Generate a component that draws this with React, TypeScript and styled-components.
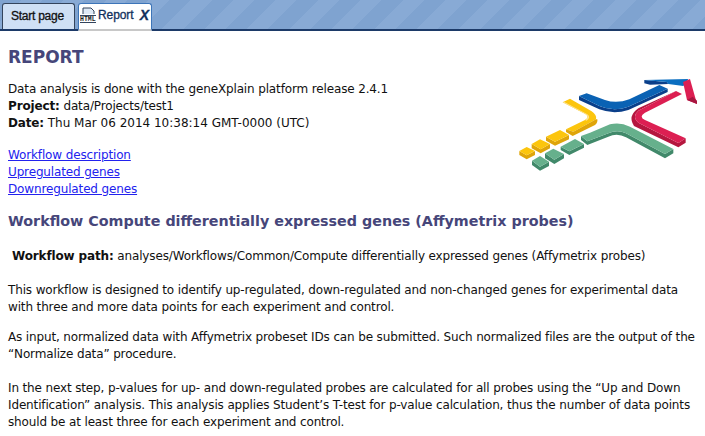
import styled, { createGlobalStyle } from "styled-components";

const Global = createGlobalStyle`
  html, body { margin: 0; padding: 0; background: #fff; }
  body { width: 705px; height: 436px; overflow: hidden; }
`;

const Page = styled.div`
  width: 705px;
  height: 436px;
  overflow: hidden;
  font-family: "DejaVu Sans", "Noto Sans", sans-serif;
  font-size: 12px;
  line-height: 17px;
  letter-spacing: -0.14px;
  color: #111;
`;

const TabStrip = styled.div`
  display: flex;
  align-items: flex-start;
  gap: 3px;
  padding: 3px 0 0 2px;
  height: 26px;
  border-bottom: 2px solid #1c3a68;
  background: repeating-linear-gradient(135deg, #7fa3d0 0 15px, #88aad5 15px 30px);
  font-family: "Liberation Sans", Arial, sans-serif;
  letter-spacing: 0;
`;

const Tab = styled.div<{ $active?: boolean }>`
  height: ${(p) => (p.$active ? "28px" : "26px")};
  box-sizing: border-box;
  display: flex;
  align-items: center;
  gap: 2px;
  white-space: nowrap;
  padding: ${(p) => (p.$active ? "0 1px 2px 1px" : "0 8px")};
  width: ${(p) => (p.$active ? "74px" : "73px")};
  border: 1px solid ${(p) => (p.$active ? "#3d75b8" : "#33445c")};
  border-bottom: ${(p) => (p.$active ? "2px solid #c8c8c8" : "none")};
  border-radius: 3px 3px 0 0;
  background: ${(p) => (p.$active ? "#fff" : "#cfe0f5")};
  color: ${(p) => (p.$active ? "#12305c" : "#111")};
  letter-spacing: ${(p) => (p.$active ? "-0.1px" : "-0.25px")};
  -webkit-text-stroke: 0.3px currentColor;
`;

const CloseMark = styled.span`
  margin-left: auto;
  margin-right: 1px;
  font-weight: 700;
  font-style: italic;
  font-size: 14px;
  color: #12305c;
`;

const Content = styled.div`
  position: relative;
  padding: 0 8px;
`;

const Title = styled.h1`
  margin: 0;
  padding-top: 15px;
  font-size: 17px;
  line-height: 22px;
  letter-spacing: 0;
  font-weight: 700;
  color: #46467a;
`;

const Meta = styled.div`
  margin-top: 13px;
`;

const DateValue = styled.span`
  letter-spacing: 0;
`;

const Links = styled.div`
  margin-top: 15px;
  display: flex;
  flex-direction: column;
  a { color: #2222ee; text-decoration: underline; }
`;

const Heading = styled.h2`
  margin: 13px 0 0;
  font-size: 14.3px;
  line-height: 20px;
  letter-spacing: 0;
  font-weight: 700;
  color: #46467a;
`;

const WorkflowPath = styled.p`
  margin: 17px 0 0;
  padding-left: 4px;
  white-space: nowrap;
`;

const Para = styled.p<{ $gap?: number }>`
  margin: ${(p) => p.$gap ?? 13}px 0 0;
  white-space: nowrap;
`;

const LogoWrap = styled.svg`
  position: absolute;
  left: 510px;
  top: 39px;
  width: 195px;
  height: 110px;
`;

function HtmlIcon() {
  return (
    <svg width="16" height="17" viewBox="0 0 16 17">
      <path d="M3 7V1h8l3 3v3" fill="#dfe9f5" stroke="#33445c" />
      <path d="M0 8.5h16M0 15.5h16" stroke="#33445c" />
      <text x="0" y="14" fontFamily="'Liberation Mono', monospace" fontSize="6.5" fontWeight="700" letterSpacing="0" fill="#222">HTML</text>
    </svg>
  );
}

const YELLOW = ["#fcc50d", "#dfa50a"];
const GREEN = ["#66b08c", "#41896a"];

// small blocks of the logo: top face, then the side below it
const blocks = [
  { c: YELLOW, top: "108,200 150,180 177,195 135,215", side: "108,200 135,215 177,195 177,208 135,227 108,212" },
  { c: YELLOW, top: "65,222 90,208 120,222 92,238", side: "65,222 92,238 120,222 120,235 92,250 65,235" },
  { c: YELLOW, top: "28,243 50,231 75,243 50,256", side: "28,243 50,256 75,243 75,255 50,268 28,255" },
  { c: GREEN, top: "152,230 195,207 222,222 178,244", side: "152,230 178,244 222,222 222,233 178,255 152,240" },
  { c: GREEN, top: "105,250 130,236 162,252 133,269", side: "105,250 133,269 162,252 162,265 133,282 105,265" },
  { c: GREEN, top: "66,272 90,258 117,275 90,290", side: "66,272 90,290 117,275 117,288 90,302 66,285" },
];

// coordinates are those of a 3x crop of the logo
function Logo() {
  return (
    <LogoWrap viewBox="0 0 585 330">
      <path d="M207 78V90L268 118Q310 134 355 120L473 66V56L355 110Q310 126 268 108Z" fill="#0a3f8a" />
      <path d="M207 78L230 70L285 90Q320 102 358 88L448 45L473 56L355 110Q310 126 268 108Z" fill="#0a62b4" />
      <path d="M403 30V40L420 44L475 42L470 36Z" fill="#0a3f8a" />
      <path d="M403 30L535 27L520 48L475 42L470 36Z" fill="#0a6ec0" />
      <path d="M519 36L540 27L561 102L531 90Z" fill="#dc1f52" />
      <path d="M531 90L561 102V92L548 80Z" fill="#a81640" />
      <path d="M158 97L180 86L245 124Q262 136 258 148L190 185L168 178L225 150Q240 142 226 132Z" fill="#fcc50d" />
      <path d="M158 97L162 95L232 133Q244 142 230 152L225 150Q240 142 226 132Z" fill="#fde392" />
      <path d="M168 178V186L188 198L255 165Q264 158 262 148L258 148L190 185Z" fill="#dfa50a" />
      <path d="M498 63L385 115Q352 138 372 168L505 232L527 218V205L505 219L385 158Q365 140 385 122Z" fill="#b5173f" />
      <path d="M498 63L516 72L405 128Q385 140 405 150L527 205L505 219L385 158Q365 140 385 122Z" fill="#dc1f52" />
      <path d="M213 198V210L232 225L295 200Q322 188 348 202L465 265L490 250V237L465 252L348 190Q322 178 295 190L232 214Z" fill="#41896a" />
      <path d="M213 198L240 188L300 163Q330 155 360 170L490 237L465 252L348 190Q322 178 295 190L232 214Z" fill="#66b08c" />
      {blocks.map((b) => (
        <g key={b.top}>
          <polygon points={b.side} fill={b.c[1]} />
          <polygon points={b.top} fill={b.c[0]} />
        </g>
      ))}
    </LogoWrap>
  );
}

export default function App() {
  return (
    <Page>
      <Global />
      <TabStrip>
        <Tab>Start page</Tab>
        <Tab $active>
          <HtmlIcon />
          Report
          <CloseMark>X</CloseMark>
        </Tab>
      </TabStrip>
      <Content>
        <Logo />
        <Title>REPORT</Title>
        <Meta>
          Data analysis is done with the geneXplain platform release 2.4.1
          <br />
          <b>Project:</b> data/Projects/test1
          <br />
          <b>Date:</b> <DateValue>Thu Mar 06 2014 10:38:14 GMT-0000 (UTC)</DateValue>
        </Meta>
        <Links>
          <span><a href="#workflow">Workflow description</a></span>
          <span><a href="#up">Upregulated genes</a></span>
          <span><a href="#down">Downregulated genes</a></span>
        </Links>
        <Heading>Workflow Compute differentially expressed genes (Affymetrix probes)</Heading>
        <WorkflowPath>
          <b>Workflow path:</b> analyses/Workflows/Common/Compute differentially expressed genes (Affymetrix probes)
        </WorkflowPath>
        <Para $gap={17}>
          This workflow is designed to identify up-regulated, down-regulated and non-changed genes for experimental data
          <br />
          with three and more data points for each experiment and control.
        </Para>
        <Para>
          As input, normalized data with Affymetrix probeset IDs can be submitted. Such normalized files are the output of the
          <br />
          “Normalize data” procedure.
        </Para>
        <Para $gap={17}>
          In the next step, p-values for up- and down-regulated probes are calculated for all probes using the “Up and Down
          <br />
          Identification” analysis. This analysis applies Student’s T-test for p-value calculation, thus the number of data points
          <br />
          should be at least three for each experiment and control.
        </Para>
      </Content>
    </Page>
  );
}
